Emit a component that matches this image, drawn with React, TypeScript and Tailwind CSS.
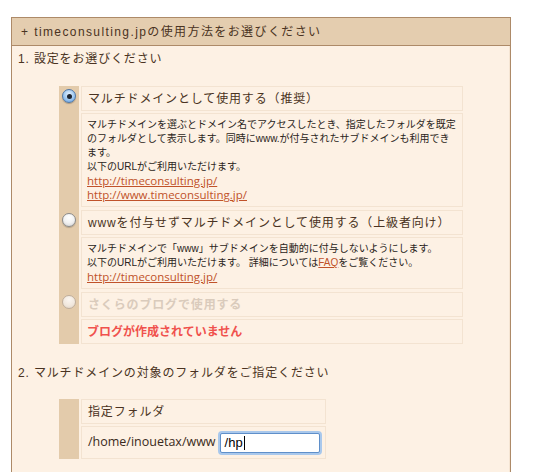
// settings panel: multi-domain usage
const font = "font-['Liberation_Sans','Noto_Sans_CJK_JP',sans-serif]"

function Radio({ state }: { state: 'on' | 'off' | 'disabled' }) {
	if (state === 'on') {
		return (
			<div className="w-[14px] h-[14px] rounded-full border border-[#4f77a6] bg-[radial-gradient(circle_at_50%_35%,#e4f1fd_0%,#9cc6ef_55%,#5d9be0_100%)] flex items-center justify-center shadow-[0_1px_1px_rgba(0,0,0,0.25)]">
				<div className="w-[5px] h-[5px] rounded-full bg-[#1d2430]" />
			</div>
		)
	}
	if (state === 'off') {
		return (
			<div className="w-[14px] h-[14px] rounded-full border border-[#8b8b8b] bg-[radial-gradient(circle_at_50%_30%,#ffffff_0%,#f2f2f2_50%,#cfcfcf_100%)] shadow-[0_1px_1px_rgba(0,0,0,0.2)]" />
		)
	}
	return (
		<div className="w-[14px] h-[14px] rounded-full border border-[#bfae9c] bg-[radial-gradient(circle_at_50%_30%,#fbf6f1_0%,#f0e7dd_60%,#ddd0c1_100%)]" />
	)
}

function Option({
	radio,
	title,
	children,
	last,
}: {
	radio: 'on' | 'off' | 'disabled'
	title: React.ReactNode
	children: React.ReactNode
	last?: boolean
}) {
	return (
		<div className="flex">
			<div className="w-[20px] shrink-0 bg-[#e3cbab] pt-[3px] pl-[3px]">
				<Radio state={radio} />
			</div>
			<div className={`ml-[2px] w-[382px] flex flex-col gap-[2px] ${last ? '' : 'pb-[3px]'}`}>
				<div className="h-[25px] border border-[#f3e3d1] pl-[6px] flex items-center">{title}</div>
				{children}
			</div>
		</div>
	)
}

const heading = 'text-[12px] tracking-[0.85px] text-[#4a3322] leading-[18px] whitespace-nowrap'
const desc = 'border border-[#f3e3d1] px-[5px] py-[4px] text-[10px] text-[#2a2420] whitespace-nowrap'
const line = 'h-[14px] leading-[14px]'
const link = "block h-[14px] leading-[14px] font-['Open_Sans',sans-serif] text-[11.5px] text-[#c0522a] underline underline-offset-[1px]"

export default function App() {
	return (
		<div className={`h-[472px] overflow-hidden bg-white pt-[17px] pl-[11px] ${font}`}>
			<div className="w-[500px] min-h-[480px] border border-b-0 border-[#ad8a68] bg-[#fdf1e4]">
				{/* header */}
				<div className="h-[28px] bg-[#e4cdaf] border-b border-[#ad8a68] pl-[9px] flex items-center">
					<span className="text-[12px] tracking-[1.4px] text-[#4a3322] whitespace-nowrap">
						+ timeconsulting.jpの使用方法をお選びください
					</span>
				</div>

				<div className="pl-[6px] pt-[4px] border-r border-[#f5e5d3] min-h-[460px]">
					<div className={heading}>1. 設定をお選びください</div>

					{/* options */}
					<div className="mt-[18px] ml-[41px] flex flex-col">
						<Option radio="on" title={<span className={heading}>マルチドメインとして使用する（推奨）</span>}>
							<div className={desc}>
								<div className={line}>マルチドメインを選ぶとドメイン名でアクセスしたとき、指定したフォルダを既定</div>
								<div className={line}>のフォルダとして表示します。同時にwww.が付与されたサブドメインも利用でき</div>
								<div className={line}>ます。</div>
								<div className={line}>以下のURLがご利用いただけます。</div>
								<div>
									<a className={link}>http://timeconsulting.jp/</a>
								</div>
								<div>
									<a className={link}>http://www.timeconsulting.jp/</a>
								</div>
							</div>
						</Option>
						<Option
							radio="off"
							title={<span className={heading}>wwwを付与せずマルチドメインとして使用する（上級者向け）</span>}
						>
							<div className={desc}>
								<div className={line}>マルチドメインで「www」サブドメインを自動的に付与しないようにします。</div>
								<div className={line}>
									以下のURLがご利用いただけます。 詳細については
									<a className="text-[#c0522a] underline underline-offset-[1px]">FAQ</a>をご覧ください。
								</div>
								<div>
									<a className={link}>http://timeconsulting.jp/</a>
								</div>
							</div>
						</Option>
						<Option
							radio="disabled"
							last
							title={
								<span className="text-[12px] tracking-[0.85px] font-bold text-[#dacbbc] whitespace-nowrap">
									さくらのブログで使用する
								</span>
							}
						>
							<div className="h-[25px] border border-[#f3e3d1] pl-[5px] flex items-center">
								<span className="text-[12px] font-bold text-[#f0514d] whitespace-nowrap">
									ブログが作成されていません
								</span>
							</div>
						</Option>
					</div>

					<div className={`${heading} mt-[20px]`}>2. マルチドメインの対象のフォルダをご指定ください</div>

					{/* folder */}
					<div className="mt-[17px] ml-[41px] flex">
						<div className="w-[20px] shrink-0 bg-[#e3cbab]" />
						<div className="ml-[2px] w-[245px] flex flex-col gap-[2px]">
							<div className="h-[25px] border border-[#f3e3d1] pl-[6px] flex items-center">
								<span className={heading}>指定フォルダ</span>
							</div>
							<div className="h-[33px] border border-[#f3e3d1] pl-[6px] flex items-center gap-[4px]">
								<span className="font-['Open_Sans',sans-serif] text-[12.5px] text-[#3a2a20] whitespace-nowrap">
									/home/inouetax/www
								</span>
								<div className="w-[100px] h-[20px] border border-[#5f8fc9] rounded-[2px] bg-white shadow-[0_0_0_2px_#a9c8ec] flex items-center pl-[4px]">
									<span className="text-[13px] text-black leading-none">/hp</span>
									<span className="w-[1px] h-[14px] bg-black ml-[1px]" />
								</div>
							</div>
						</div>
					</div>
				</div>
			</div>
		</div>
	)
}
